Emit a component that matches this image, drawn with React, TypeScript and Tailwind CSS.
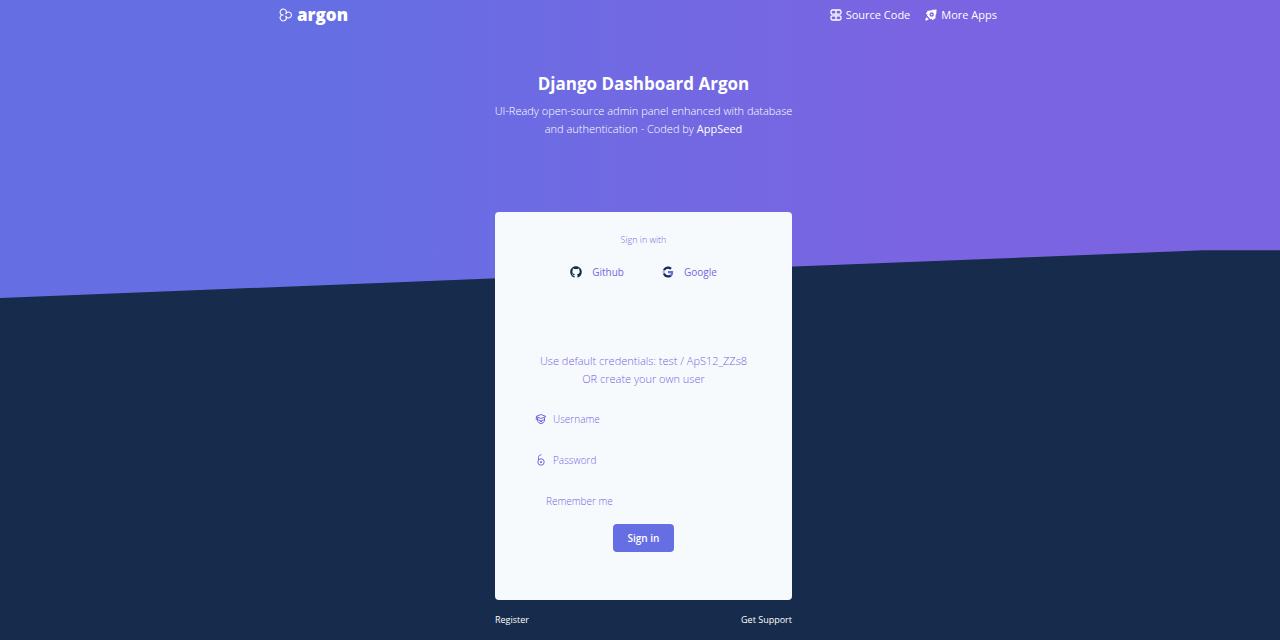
import React from "react";
import { FaGithub } from "react-icons/fa";

function LogoMark() {
  return (
    <svg viewBox="0 0 14 14" className="size-[14px]" fill="none" stroke="currentColor" strokeWidth="1.1" aria-hidden="true">
      <path d="M3 7A3.100 3.100 0 1 1 7.300 4.900 3 3 0 1 1 7.300 9.100 3.100 3.100 0 1 1 3 7Z" />
      <path d="M3 7H4.600M7.300 4.900 6.700 5.900M7.300 9.100 6.700 8.100" />
    </svg>
  );
}

function BlocksIcon() {
  return (
    <svg viewBox="0 0 12 12" className="size-3" fill="none" stroke="currentColor" strokeWidth="1.3" aria-hidden="true">
      <rect x="1" y="1" width="10" height="4.200" rx="1.500" />
      <rect x="1" y="6.800" width="10" height="4.200" rx="1.500" />
      <path d="M6 1v4.200M6 6.800V11" />
    </svg>
  );
}

function SpaceshipIcon() {
  return (
    <svg viewBox="0 0 12 12" className="size-3" aria-hidden="true">
      <path
        fill="currentColor"
        fillRule="evenodd"
        d="M11.600.4 11.300 4.500 10.600 6.200 10.400 9.300 7.200 11.300 6.800 9.700 5.500 10.200 2 6.600 2.500 5.300.8 4.900 2.700 1.700 6 1.400 7.600.7ZM6.700 3.300a2.200 2.200 0 1 0 0 4.400 2.200 2.200 0 0 0 0-4.400ZM6.700 4.700a.8.8 0 1 1 0 1.600.8.8 0 0 1 0-1.600ZM1.700 8.200 3.800 10.300C2.900 11.300 1.700 11.500.300 11.600.300 10.200.700 9 1.700 8.200Z"
      />
    </svg>
  );
}

function GoogleIcon() {
  return (
    <svg viewBox="0 0 48 48" className="size-3" aria-hidden="true">
      <path fill="#172b4d" d="M4 15C7.500 7 15 2 24 2c6 0 11 2 15 6l-6.500 6.500C30 12 27 11 24 11c-5.500 0-10 3.500-12 8Z" />
      <path fill="#a9b5e8" d="M4 15a22 22 0 0 0 0 18l8-6a12 12 0 0 1 0-8Z" />
      <path fill="#172b4d" d="M4 33c3.500 8 11 13 20 13 6 0 11-2 15-5.500L32 35c-2 1.500-5 2-8 2-5.500 0-10-3.500-12-9Z" />
      <path fill="#666ee4" d="M24 20v9h12c-.6 2.600-2 4.600-4 6l7 5.500c4.500-4 6.500-11 5.500-20.500Z" />
    </svg>
  );
}

function HatIcon() {
  return (
    <svg viewBox="0 0 12 12" className="size-3" fill="none" stroke="currentColor" strokeWidth="1" aria-hidden="true">
      <path d="M1 3.500 6 1.500l5 2-5 2ZM2.500 4.500v2.500c0 2 1.500 3.500 3.500 3.500S9.500 9 9.500 7V4.500M2.500 6.500 6 8l3.500-1.500M1.300 4v3M4.500 9.500 6 8l1.500 1.500" />
    </svg>
  );
}

function LockIcon() {
  return (
    <svg viewBox="0 0 12 12" className="size-3" fill="none" stroke="currentColor" strokeWidth="1" aria-hidden="true">
      <circle cx="6" cy="8" r="3.200" />
      <circle cx="6" cy="8" r="0.700" />
      <path d="M3.500 6V3.500C3.500 2 4.500.8 6.500.8" />
    </svg>
  );
}

function Field({ id, type, label, icon }: { id: string; type: string; label: string; icon: React.ReactNode }) {
  return (
    <div className="flex h-7 items-center gap-[6px]">
      <label htmlFor={id} aria-label={label}>{icon}</label>
      <input
        id={id}
        type={type}
        placeholder={label}
        className="min-w-0 flex-1 bg-transparent text-[10px] leading-4 font-light outline-none placeholder:text-[#7764e2]"
      />
    </div>
  );
}

export default function App() {
  return (
    <div className="relative isolate min-h-screen bg-[#172b4d] font-['Open_Sans',sans-serif] text-white">
      <div
        aria-hidden="true"
        className="absolute inset-x-0 top-0 -z-10 h-[298px] bg-linear-to-r from-[#666ee4] from-27% to-[#7b64e1] to-73% [clip-path:polygon(0_0,100%_0,100%_84%,94%_84%,0_100%)]"
      />
      <header className="mx-auto flex h-[30px] max-w-[722px] items-center justify-between pr-1">
        <a href="#home" className="flex items-center gap-1">
          <LogoMark />
          <span className="text-[17px] leading-6 font-extrabold">argon</span>
        </a>
        <nav className="flex items-center gap-[15px] text-[11px] leading-4">
          <a href="#source" className="flex items-center gap-1">
            <BlocksIcon />
            Source Code
          </a>
          <a href="#apps" className="flex items-center gap-1">
            <SpaceshipIcon />
            More Apps
          </a>
        </nav>
      </header>

      <main className="flex flex-col items-center pl-[7px]">
        <section className="flex flex-col items-center pt-[42px] text-center">
          <h1 className="text-[17px] leading-6 font-bold">Django Dashboard Argon</h1>
          <p className="mt-[6px] max-w-[300px] text-[11px] leading-[18px] font-light">
            UI-Ready open-source admin panel enhanced with database and authentication - Coded by{" "}
            <a href="#appseed" className="font-normal">AppSeed</a>
          </p>
        </section>

        <div className="mt-[74px] w-full max-w-[297px]">
          <section className="rounded bg-[#f7fafc] pb-12 text-[#7764e2]">
            <p className="pt-5 text-center text-[9px] leading-4 font-light">Sign in with</p>
            <div className="mt-4 flex justify-center gap-[38px] text-[10px] leading-4 font-medium">
              <button type="button" className="flex items-center gap-[10px]">
                <FaGithub className="size-3 text-[#172b4d]" aria-hidden="true" />
                Github
              </button>
              <button type="button" className="flex items-center gap-[10px]">
                <GoogleIcon />
                Google
              </button>
            </div>
            <form className="px-10 pt-[72px]" onSubmit={(e) => e.preventDefault()}>
              <p className="text-center text-[11px] leading-[18px] font-light">
                Use default credentials: test / ApS12_ZZs8
                <br />
                OR create your own user
              </p>
              <div className="mt-[17px] flex flex-col gap-[13px]">
                <Field id="username" type="text" label="Username" icon={<HatIcon />} />
                <Field id="password" type="password" label="Password" icon={<LockIcon />} />
              </div>
              <div className="mt-[19px] flex items-center">
                <input id="remember" type="checkbox" className="size-[11px] appearance-none rounded-sm bg-[#f7fafc] checked:bg-[#666ee4]" />
                <label htmlFor="remember" className="text-[10px] leading-4 font-light">Remember me</label>
              </div>
              <button type="submit" className="mx-auto mt-[15px] block h-7 w-[61px] rounded bg-[#666ee4] text-[10px] leading-4 font-semibold text-white">
                Sign in
              </button>
            </form>
          </section>
          <div className="mt-3 flex justify-between text-[9px] leading-4">
            <a href="#register">Register</a>
            <a href="#support">Get Support</a>
          </div>
        </div>
      </main>
    </div>
  );
}
